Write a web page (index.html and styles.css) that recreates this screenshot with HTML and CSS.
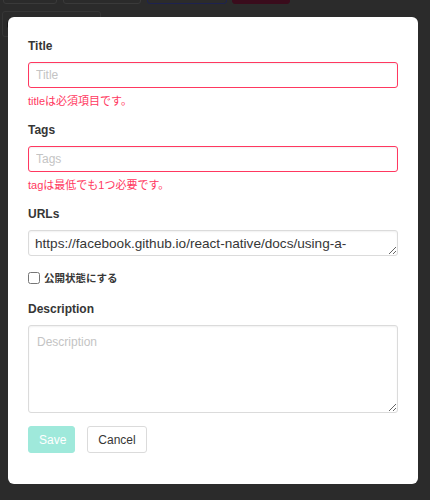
FILE: index.html
```html
<!DOCTYPE html>
<html lang="ja">
<head>
<meta charset="utf-8">
<link rel="stylesheet" href="styles.css">
</head>
<body>
<div class="backdrop">
  <div class="bg-row">
    <span class="bg-btn b1"></span>
    <span class="bg-btn b2"></span>
    <span class="bg-btn b3"></span>
    <span class="bg-btn b4"></span>
  </div>
  <div class="bg-card"><span class="bg-dot"></span></div>
</div>
<div class="modal">
  <form class="form">
    <div class="field">
      <label class="label">Title</label>
      <input class="input is-danger" type="text" placeholder="Title">
      <p class="help">titleは必須項目です。</p>
    </div>
    <div class="field">
      <label class="label">Tags</label>
      <input class="input is-danger" type="text" placeholder="Tags">
      <p class="help">tagは最低でも1つ必要です。</p>
    </div>
    <div class="field field-urls">
      <label class="label">URLs</label>
      <textarea class="textarea urls">https://facebook.github.io/react-native/docs/using-a-listview.html</textarea>
    </div>
    <label class="check"><input type="checkbox" class="checkbox"><span>公開状態にする</span></label>
    <div class="field">
      <label class="label">Description</label>
      <textarea class="textarea desc" placeholder="Description"></textarea>
    </div>
    <div class="buttons">
      <button type="button" class="button save" disabled>Save</button>
      <button type="button" class="button cancel">Cancel</button>
    </div>
  </form>
</div>
</body>
</html>
```
FILE: styles.css
```css
* { box-sizing: border-box; }
html, body {
  margin: 0;
  height: 100%;
}
body {
  background: #2b2b2b;
  font-family: "Liberation Sans", "Noto Sans CJK JP", sans-serif;
  color: #363636;
  overflow: hidden;
}
.backdrop {
  padding: 0 2px;
}
.bg-row {
  display: flex;
  margin-top: -21px;
  padding-left: 1px;
}
.bg-btn {
  display: block;
  height: 25px;
  border: 1px solid #3a3a3a;
  border-radius: 3px;
  margin-right: 6px;
}
.b1 { width: 54px; }
.b2 { width: 78px; }
.b3 { width: 80px; border-color: #1d2250; margin-right: 5px; }
.b4 { width: 58px; background: #3a0c1c; border-color: #3a0c1c; }
.bg-card {
  margin-top: 7px;
  width: 99px;
  height: 26px;
  border: 1px solid #363636;
  border-radius: 3px;
  padding: 9px 0 0 4px;
}
.bg-dot {
  display: block;
  width: 4px;
  height: 7px;
  background: #151515;
  border-radius: 2px;
}
.modal {
  position: fixed;
  left: 8px;
  top: 17px;
  width: 410px;
  height: 467px;
  background: #fff;
  border-radius: 6px;
  padding: 21px 20px 0 20px;
}
.form {
  display: flex;
  flex-direction: column;
}
.field {
  display: flex;
  flex-direction: column;
  margin-bottom: 14px;
}
.label {
  font-size: 12px;
  font-weight: bold;
  line-height: 16px;
  color: #363636;
  margin-bottom: 8px;
}
.input, .textarea {
  font-family: "Liberation Sans", "Noto Sans CJK JP", sans-serif;
  font-size: 12px;
  color: #363636;
  width: 370px;
  border: 1px solid #dbdbdb;
  border-radius: 3px;
  background: #fff;
  outline: none;
  box-shadow: inset 0 1px 2px rgba(10,10,10,0.06);
}
.input {
  height: 26px;
  padding: 0 7px;
}
.input.is-danger { border-color: #ff3860; }
.input::placeholder, .textarea::placeholder { color: #c4c4c4; }
.help {
  margin: 6px 0 0;
  font-size: 11px;
  line-height: 14px;
  color: #ff3860;
}
.textarea {
  display: block;
  resize: vertical;
  overflow: hidden;
  line-height: 16px;
}
.urls {
  height: 26px;
  padding: 4px 6px;
  font-size: 13.6px;
  line-height: 17px;
}
.field-urls { margin-bottom: 14px; }
.desc {
  height: 88px;
  padding: 8px 8px;
}
.check {
  display: flex;
  align-items: center;
  font-size: 10.5px;
  font-weight: bold;
  line-height: 16px;
  margin-bottom: 15px;
}
.checkbox {
  width: 12px;
  height: 12px;
  margin: 0 4px 0 0;
}
.buttons {
  display: flex;
  gap: 12px;
  margin-top: -1px;
}
.button {
  height: 27px;
  font-family: "Liberation Sans", sans-serif;
  font-size: 12px;
  border-radius: 3px;
  padding: 0 10px;
}
.save {
  width: 47px;
  background: #9fe9db;
  border: 1px solid #9fe9db;
  color: #fff;
}
.cancel {
  width: 60px;
  background: #fff;
  border: 1px solid #dbdbdb;
  color: #363636;
}
```
